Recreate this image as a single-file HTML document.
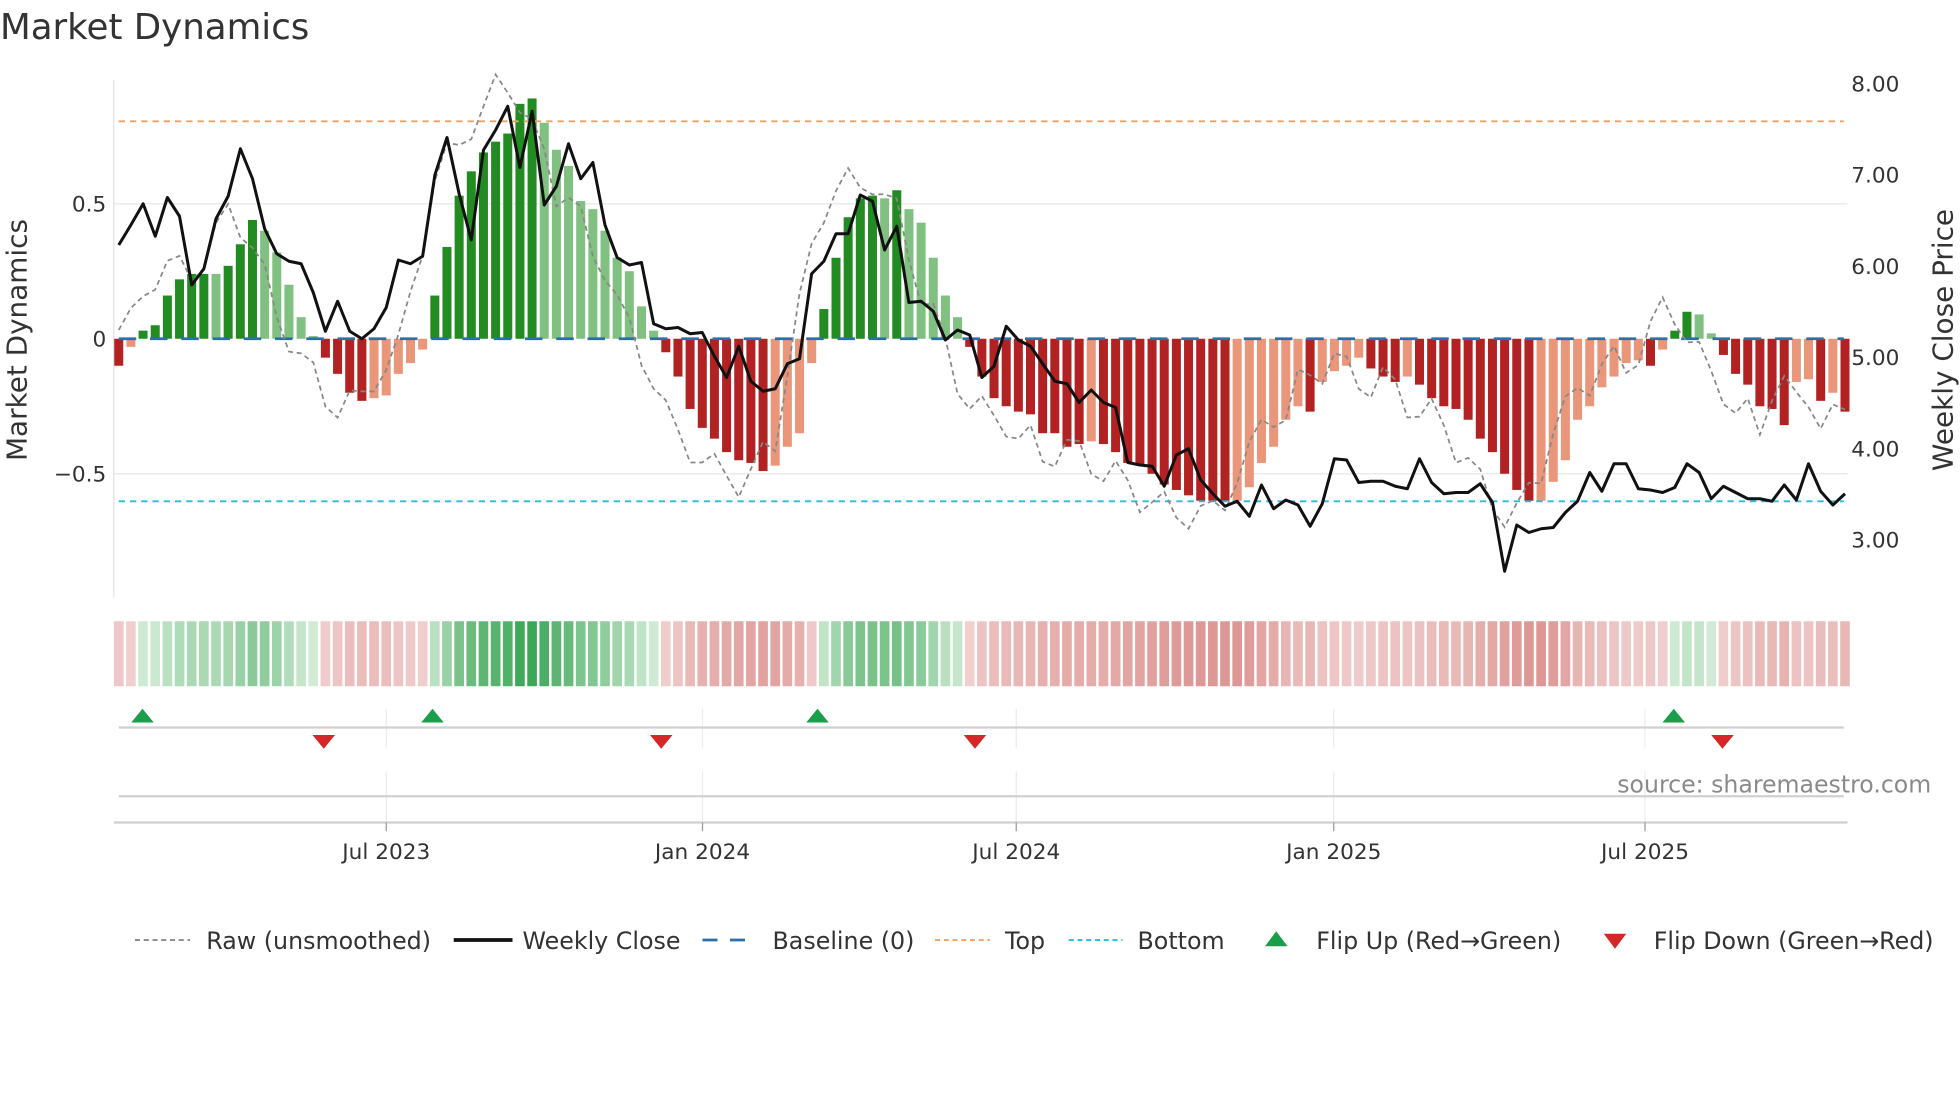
<!DOCTYPE html>
<html><head><meta charset="utf-8">
<style>
html,body{margin:0;padding:0;background:#fff;}
svg{display:block;font-family:"DejaVu Sans","Liberation Sans",sans-serif;}
</style></head>
<body>
<svg id="s" width="1960" height="1102" viewBox="0 0 1568 881.6" xmlns="http://www.w3.org/2000/svg">
<rect width="1568" height="882" fill="#fff"/>
<text x="0" y="31" font-size="28.5" fill="#333">Market Dynamics</text>
<line x1="91" y1="163" x2="1478" y2="163" stroke="#ebebeb" stroke-width="1.2"/>
<line x1="91" y1="379" x2="1478" y2="379" stroke="#ebebeb" stroke-width="1.2"/>
<line x1="91" y1="64" x2="91" y2="478" stroke="#e6e6e6" stroke-width="1.2"/>
<g id="bars"></g>
<line x1="95" y1="97" x2="1475" y2="97" stroke="#f0a060" stroke-width="1.5" stroke-dasharray="5,4"/>
<line x1="95" y1="401" x2="1475" y2="401" stroke="#22c0d8" stroke-width="1.5" stroke-dasharray="5,4"/>
<line x1="95" y1="271" x2="1475" y2="271" stroke="#2a6fa8" stroke-width="2.2" stroke-dasharray="14,11"/>
<g id="lines"></g>
<g font-size="17.3" fill="#333" text-anchor="end">
<text x="85" y="169">0.5</text>
<text x="85" y="277">0</text>
<text x="85" y="385">−0.5</text>
</g>
<text transform="translate(21,272) rotate(-90)" font-size="22.3" fill="#333" text-anchor="middle">Market Dynamics</text>
<g font-size="17.3" fill="#333">
<text x="1481" y="73">8.00</text>
<text x="1481" y="146">7.00</text>
<text x="1481" y="219">6.00</text>
<text x="1481" y="292">5.00</text>
<text x="1481" y="365">4.00</text>
<text x="1481" y="438">3.00</text>
</g>
<text transform="translate(1562,272) rotate(-90)" font-size="22.3" fill="#333" text-anchor="middle">Weekly Close Price</text>
<g id="heat"></g>
<g stroke="#ececec" stroke-width="1">
<line x1="309" y1="567" x2="309" y2="598"/><line x1="562" y1="567" x2="562" y2="598"/><line x1="813" y1="567" x2="813" y2="598"/><line x1="1067" y1="567" x2="1067" y2="598"/><line x1="1316" y1="567" x2="1316" y2="598"/>
<line x1="309" y1="617" x2="309" y2="658"/><line x1="562" y1="617" x2="562" y2="658"/><line x1="813" y1="617" x2="813" y2="658"/><line x1="1067" y1="617" x2="1067" y2="658"/><line x1="1316" y1="617" x2="1316" y2="658"/>
</g>
<line x1="95" y1="582" x2="1475" y2="582" stroke="#d0d0d0" stroke-width="1.8"/>
<line x1="95" y1="637" x2="1475" y2="637" stroke="#d0d0d0" stroke-width="1.8"/>
<line x1="91" y1="658" x2="1478" y2="658" stroke="#d0d0d0" stroke-width="1.8"/>
<g stroke="#999" stroke-width="1"><line x1="309" y1="658" x2="309" y2="665"/><line x1="562" y1="658" x2="562" y2="665"/><line x1="813" y1="658" x2="813" y2="665"/><line x1="1067" y1="658" x2="1067" y2="665"/><line x1="1316" y1="658" x2="1316" y2="665"/></g>
<g fill="#1a9e4a">
<polygon points="105,578 114,567 123,578"/><polygon points="337,578 346,567 355,578"/><polygon points="645,578 654,567 663,578"/><polygon points="1330,578 1339,567 1348,578"/>
</g>
<g fill="#d62728">
<polygon points="250,588 268,588 259,599"/><polygon points="520,588 538,588 529,599"/><polygon points="771,588 789,588 780,599"/><polygon points="1369,588 1387,588 1378,599"/>
</g>
<text x="1545" y="634" font-size="18.9" fill="#8a8a8a" text-anchor="end">source: sharemaestro.com</text>
<g font-size="17.3" fill="#333" text-anchor="middle">
<text x="309" y="687">Jul 2023</text><text x="562" y="687">Jan 2024</text><text x="813" y="687">Jul 2024</text><text x="1067" y="687">Jan 2025</text><text x="1316" y="687">Jul 2025</text>
</g>
<g font-size="19" fill="#333">
<line x1="108" y1="752" x2="152" y2="752" stroke="#888" stroke-width="1.5" stroke-dasharray="4,3"/>
<text x="165" y="759">Raw (unsmoothed)</text>
<line x1="363" y1="752" x2="410" y2="752" stroke="#111" stroke-width="3"/>
<text x="418" y="759">Weekly Close</text>
<line x1="562" y1="752" x2="606" y2="752" stroke="#2a6fa8" stroke-width="2.2" stroke-dasharray="12,10"/>
<text x="618" y="759">Baseline (0)</text>
<line x1="748" y1="752" x2="792" y2="752" stroke="#f0a060" stroke-width="1.5" stroke-dasharray="4,3"/>
<text x="804" y="759">Top</text>
<line x1="855" y1="752" x2="898" y2="752" stroke="#22c0d8" stroke-width="1.5" stroke-dasharray="4,3"/>
<text x="910" y="759">Bottom</text>
<polygon points="1012,757 1021,745 1030,757" fill="#1a9e4a"/>
<text x="1053" y="759">Flip Up (Red→Green)</text>
<polygon points="1283,747 1301,747 1292,759" fill="#d62728"/>
<text x="1323" y="759">Flip Down (Green→Red)</text>
</g>
</svg>
<script>
(function(){
var V=[[-0.1,'R'],[-0.03,'P'],[0.03,'D'],[0.05,'D'],[0.16,'D'],[0.22,'D'],[0.24,'D'],[0.24,'D'],[0.24,'L'],[0.27,'D'],[0.35,'D'],[0.44,'D'],[0.40,'L'],[0.32,'L'],[0.2,'L'],[0.08,'L'],[0.01,'L'],[-0.07,'R'],[-0.13,'R'],[-0.2,'R'],[-0.23,'R'],[-0.22,'P'],[-0.21,'P'],[-0.13,'P'],[-0.09,'P'],[-0.04,'P'],
[0.16,'D'],[0.34,'D'],[0.53,'D'],[0.62,'D'],[0.69,'D'],[0.73,'D'],[0.76,'D'],[0.87,'D'],[0.89,'D'],[0.8,'L'],[0.7,'L'],[0.64,'L'],[0.51,'L'],[0.48,'L'],[0.4,'L'],[0.3,'L'],[0.25,'L'],[0.12,'L'],[0.03,'L'],
[-0.05,'R'],[-0.14,'R'],[-0.26,'R'],[-0.33,'R'],[-0.37,'R'],[-0.42,'R'],[-0.45,'R'],[-0.46,'R'],[-0.49,'R'],[-0.47,'P'],[-0.4,'P'],[-0.35,'P'],[-0.09,'P'],
[0.11,'D'],[0.3,'D'],[0.45,'D'],[0.52,'D'],[0.53,'D'],[0.52,'L'],[0.55,'D'],[0.48,'L'],[0.43,'L'],[0.3,'L'],[0.16,'L'],[0.08,'L'],
[-0.03,'R'],[-0.14,'R'],[-0.22,'R'],[-0.25,'R'],[-0.27,'R'],[-0.28,'R'],[-0.35,'R'],[-0.35,'R'],[-0.4,'R'],[-0.39,'R'],[-0.38,'P'],[-0.39,'R'],[-0.42,'R'],[-0.46,'R'],[-0.47,'R'],[-0.5,'R'],[-0.54,'R'],[-0.56,'R'],[-0.58,'R'],[-0.6,'R'],[-0.6,'R'],[-0.6,'R'],[-0.6,'P'],[-0.55,'P'],[-0.46,'P'],[-0.4,'P'],[-0.3,'P'],[-0.25,'P'],[-0.27,'R'],[-0.16,'P'],[-0.12,'P'],[-0.1,'P'],[-0.07,'P'],[-0.11,'R'],[-0.14,'R'],[-0.16,'R'],[-0.14,'P'],[-0.17,'R'],[-0.22,'R'],[-0.25,'R'],[-0.26,'R'],[-0.3,'R'],[-0.37,'R'],[-0.42,'R'],[-0.5,'R'],[-0.56,'R'],[-0.6,'R'],[-0.6,'P'],[-0.53,'P'],[-0.45,'P'],[-0.3,'P'],[-0.25,'P'],[-0.18,'P'],[-0.14,'P'],[-0.09,'P'],[-0.08,'P'],[-0.1,'R'],[-0.04,'P'],
[0.03,'D'],[0.1,'D'],[0.09,'L'],[0.02,'L'],
[-0.06,'R'],[-0.13,'R'],[-0.17,'R'],[-0.25,'R'],[-0.26,'R'],[-0.32,'R'],[-0.16,'P'],[-0.15,'P'],[-0.23,'R'],[-0.2,'P'],[-0.27,'R']];
var C={D:'#228b22',L:'#80c080',R:'#b22222',P:'#e9967a'};
var n=V.length,x0=95,x1=1476,p=(x1-x0)/(n-1);
var ns='http://www.w3.org/2000/svg';
function el(t,a,g){var e=document.createElementNS(ns,t);for(var k in a)e.setAttribute(k,a[k]);g.appendChild(e);return e;}
var bars=document.getElementById('bars'),heat=document.getElementById('heat'),lines=document.getElementById('lines');
var raw=[];
for(var i=0;i<n;i++){
 var v=V[i][0],x=x0+i*p,y0=271,y=271-v*216;
 el('rect',{x:(x-3.6).toFixed(2),y:Math.min(y,y0).toFixed(2),width:7.2,height:Math.max(Math.abs(y-y0),0.8).toFixed(2),fill:C[V[i][1]]},bars);
 var a=Math.min(1,Math.abs(v)/0.9),col;
 if(v>=0){col='rgb('+Math.round(212-(212-58)*a)+','+Math.round(236-(236-166)*a)+','+Math.round(216-(216-85)*a)+')';}
 else{col='rgb('+Math.round(242-(242-210)*a)+','+Math.round(210-(210-122)*a)+','+Math.round(210-(210-118)*a)+')';}
 el('rect',{x:(x-p/2+1).toFixed(2),y:497,width:(p-2).toFixed(2),height:52,fill:col},heat);
 var j=Math.min(n-1,i+2),r=V[j][0]*1.08+(Math.sin(i*1.7)*0.06);
 raw.push([x,271-r*216]);
}
var P=[196,180,163,189,158,173,228,215,175,157,119,143,183,203,209,211,234,265,241,265,271,263,246,208,211,205,140,110,155,192,120,104,85,134,89,164,149,115,143,130,180,206,212,210,259,263,262,267,266,285,302,277,305,313,311,291,287,219,209,187,187,156,161,200,181,242,241,249,272,264,268,302,293,261,272,277,291,305,307,322,312,322,326,370,372,373,389,364,359,384,395,405,401,413,388,407,400,404,421,403,367,368,386,385,385,389,391,367,386,395,394,394,387,402,457,420,426,423,422,410,401,378,393,371,371,391,392,394,390,371,378,399,389,394,399,399,401,388,400,371,393,404,395];
var m=P.length,q=(x1-x0)/(m-1),d='';
for(var k=0;k<m;k++)d+=(k?'L':'M')+(x0+k*q).toFixed(1)+' '+P[k];
var dr='';for(var k2=0;k2<raw.length;k2++)dr+=(k2?'L':'M')+raw[k2][0].toFixed(1)+' '+raw[k2][1].toFixed(1);
el('path',{d:dr,fill:'none',stroke:'#888','stroke-width':1.4,'stroke-dasharray':'4,3'},lines);
el('path',{d:d,fill:'none',stroke:'#111','stroke-width':2.4,'stroke-linejoin':'round'},lines);
})();
</script>
</body></html>
